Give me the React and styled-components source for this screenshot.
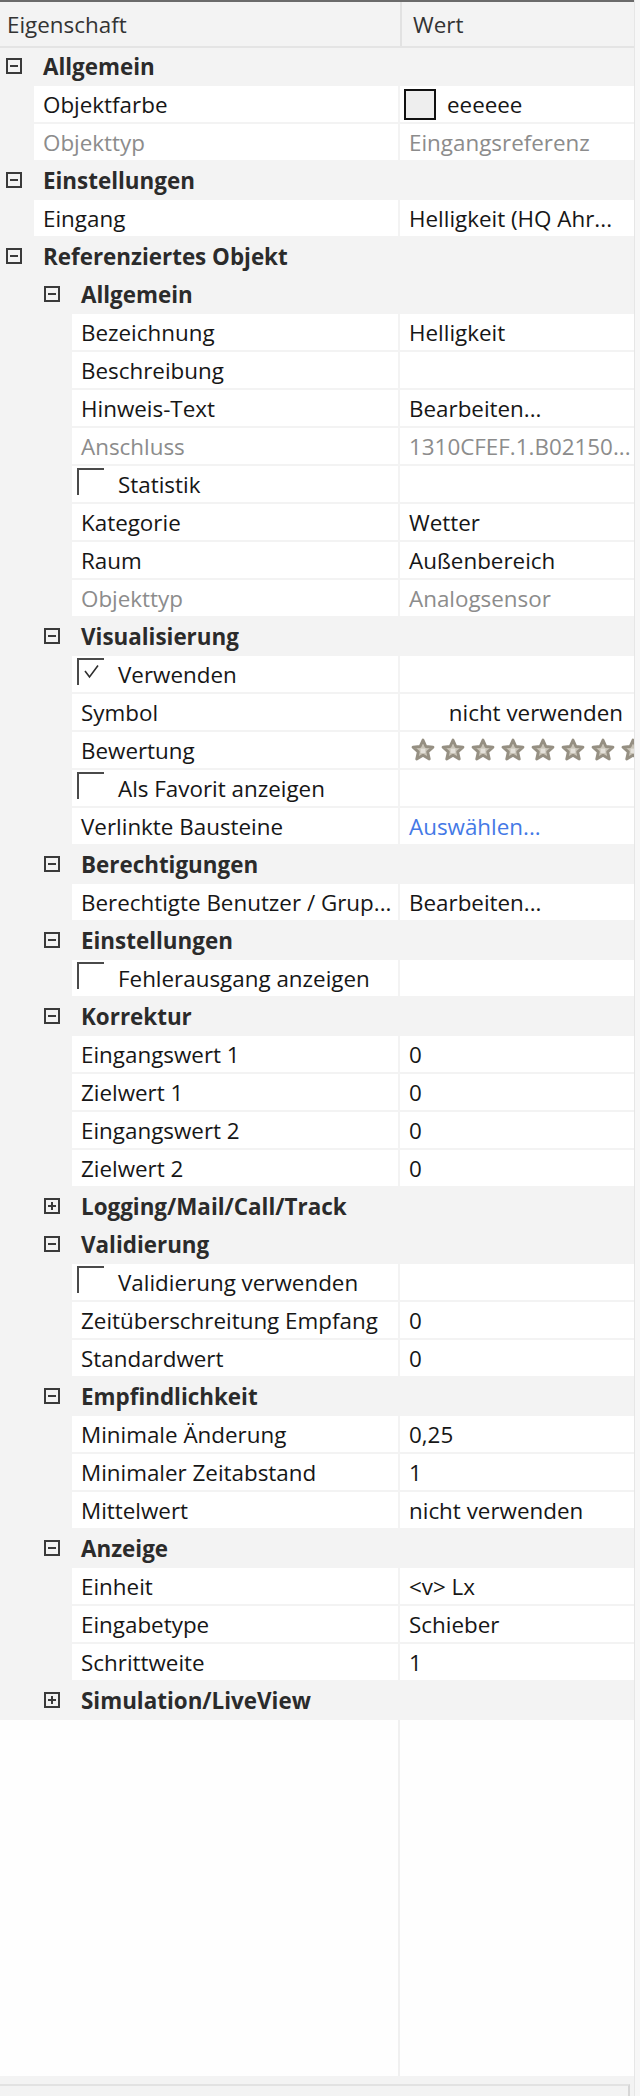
import React from 'react'
import styled, { createGlobalStyle, css } from 'styled-components'

const GlobalStyle = createGlobalStyle`
  html, body {
    margin: 0;
    padding: 0;
    background: #fafafa;
  }
  body {
    font-family: "Open Sans", "Liberation Sans", sans-serif;
    font-size: 22.4px;
    color: #161616;
  }
`

const rows = [
  { group: 'Allgemein', level: 0 },
  { label: 'Objektfarbe', value: 'eeeeee', level: 0, swatch: '#eeeeee' },
  { label: 'Objekttyp', value: 'Eingangsreferenz', level: 0, muted: true },
  { group: 'Einstellungen', level: 0 },
  { label: 'Eingang', value: 'Helligkeit (HQ Ahr...', level: 0 },
  { group: 'Referenziertes Objekt', level: 0 },
  { group: 'Allgemein', level: 1 },
  { label: 'Bezeichnung', value: 'Helligkeit', level: 1 },
  { label: 'Beschreibung', value: '', level: 1 },
  { label: 'Hinweis-Text', value: 'Bearbeiten...', level: 1 },
  { label: 'Anschluss', value: '1310CFEF.1.B02150...', level: 1, muted: true },
  { label: 'Statistik', level: 1, check: false },
  { label: 'Kategorie', value: 'Wetter', level: 1 },
  { label: 'Raum', value: 'Außenbereich', level: 1 },
  { label: 'Objekttyp', value: 'Analogsensor', level: 1, muted: true },
  { group: 'Visualisierung', level: 1 },
  { label: 'Verwenden', level: 1, check: true },
  { label: 'Symbol', value: 'nicht verwenden', level: 1, right: true },
  { label: 'Bewertung', level: 1, stars: 8 },
  { label: 'Als Favorit anzeigen', level: 1, check: false },
  { label: 'Verlinkte Bausteine', value: 'Auswählen...', level: 1, link: true },
  { group: 'Berechtigungen', level: 1 },
  { label: 'Berechtigte Benutzer / Grup...', value: 'Bearbeiten...', level: 1 },
  { group: 'Einstellungen', level: 1 },
  { label: 'Fehlerausgang anzeigen', level: 1, check: false },
  { group: 'Korrektur', level: 1 },
  { label: 'Eingangswert 1', value: '0', level: 1 },
  { label: 'Zielwert 1', value: '0', level: 1 },
  { label: 'Eingangswert 2', value: '0', level: 1 },
  { label: 'Zielwert 2', value: '0', level: 1 },
  { group: 'Logging/Mail/Call/Track', level: 1, collapsed: true },
  { group: 'Validierung', level: 1 },
  { label: 'Validierung verwenden', level: 1, check: false },
  { label: 'Zeitüberschreitung Empfang', value: '0', level: 1 },
  { label: 'Standardwert', value: '0', level: 1 },
  { group: 'Empfindlichkeit', level: 1 },
  { label: 'Minimale Änderung', value: '0,25', level: 1 },
  { label: 'Minimaler Zeitabstand', value: '1', level: 1 },
  { label: 'Mittelwert', value: 'nicht verwenden', level: 1 },
  { group: 'Anzeige', level: 1 },
  { label: 'Einheit', value: '<v> Lx', level: 1 },
  { label: 'Eingabetype', value: 'Schieber', level: 1 },
  { label: 'Schrittweite', value: '1', level: 1 },
  { group: 'Simulation/LiveView', level: 1, collapsed: true },
]

const Star = () => (
  <svg width="24" height="24" viewBox="0 0 24 24">
    <polygon
      points="12,2 14.9,8.5 22,9.2 16.7,13.9 18.3,21 12,17.3 5.7,21 7.3,13.9 2,9.2 9.1,8.5"
      fill="#c9c4b8"
      stroke="#958f82"
      strokeWidth="2.8"
      strokeLinejoin="round"
    />
    <rect x="9.6" y="10.6" width="4.8" height="4.4" fill="#e4e1da" />
  </svg>
)

const CheckMark = () => (
  <svg width="25" height="25" viewBox="0 0 25 25">
    <polyline
      points="6,11 10.5,17 19,5.5"
      fill="none"
      stroke="#2e2e2e"
      strokeWidth="1.6"
    />
  </svg>
)

export default function App() {
  return (
    <>
      <GlobalStyle />
      <Window>
        <Panel>
          <TopLine />
          <Header>
            <HeaderCell>Eigenschaft</HeaderCell>
            <HeaderDivider />
            <HeaderCell $value>Wert</HeaderCell>
          </Header>
          <HeaderLine />
          {rows.map((row, i) =>
            row.group ? (
              <GroupRow key={i} $level={row.level}>
                <GroupInner>
                  <Expander $collapsed={row.collapsed} />
                  <GroupTitle>{row.group}</GroupTitle>
                </GroupInner>
              </GroupRow>
            ) : (
              <ItemRow key={i} $level={row.level}>
                {row.check !== undefined ? (
                  <LabelCell $check>
                    <CheckBox>{row.check && <CheckMark />}</CheckBox>
                    <CheckLabel>{row.label}</CheckLabel>
                  </LabelCell>
                ) : (
                  <LabelCell $muted={row.muted}>{row.label}</LabelCell>
                )}
                <ValueCell
                  $muted={row.muted}
                  $link={row.link}
                  $right={row.right}
                  $swatch={!!row.swatch}
                  $stars={!!row.stars}
                >
                  {row.swatch && <Swatch style={{ background: row.swatch }} />}
                  {row.stars
                    ? Array.from({ length: row.stars }).map((_, s) => <Star key={s} />)
                    : row.value}
                </ValueCell>
              </ItemRow>
            )
          )}
          <Filler>
            <FillerCell />
            <FillerDivider />
            <FillerCell />
          </Filler>
          <Footer>
            <FooterBar />
          </Footer>
        </Panel>
        <RightEdge />
      </Window>
    </>
  )
}

const Window = styled.div`
  display: flex;
  width: 640px;
  height: 2096px;
  overflow: hidden;
`

const Panel = styled.div`
  width: 634px;
  display: flex;
  flex-direction: column;
  background: #f3f3f3;
`

const RightEdge = styled.div`
  flex: 1;
  background: #f7f7f7;
  border-left: 1px solid #e6e6e6;
`

const TopLine = styled.div`
  height: 2px;
  background: #6b6b6b;
`

const Header = styled.div`
  height: 44px;
  display: flex;
  background: #f3f3f3;
`

const HeaderCell = styled.div`
  display: flex;
  align-items: center;
  color: #333;
  ${({ $value }) =>
    $value
      ? css`
          flex: 1;
          padding-left: 11px;
        `
      : css`
          width: 393px;
          padding-left: 7px;
        `}
`

const HeaderDivider = styled.div`
  width: 2px;
  background: #e2e2e2;
`

const HeaderLine = styled.div`
  height: 2px;
  background: #e4e4e4;
`

const GroupRow = styled.div`
  height: 38px;
  padding-left: ${({ $level }) => 6 + $level * 38}px;
`

const GroupInner = styled.div`
  height: 36px;
  display: flex;
  align-items: center;
  gap: 21px;
`

const Expander = styled.span`
  position: relative;
  width: 16px;
  height: 16px;
  box-sizing: border-box;
  border: 2px solid #3a3a3a;
  flex-shrink: 0;

  &::before {
    content: '';
    position: absolute;
    left: 2px;
    right: 2px;
    top: 5px;
    height: 2px;
    background: #3a3a3a;
  }

  &::after {
    content: '';
    position: absolute;
    top: 2px;
    bottom: 2px;
    left: 5px;
    width: 2px;
    background: #3a3a3a;
    display: ${({ $collapsed }) => ($collapsed ? 'block' : 'none')};
  }
`

const GroupTitle = styled.span`
  font-weight: 700;
  color: #2b2b2b;
  white-space: nowrap;
`

const ItemRow = styled.div`
  height: 38px;
  display: grid;
  grid-template-columns: 1fr 234px;
  column-gap: 2px;
  padding-left: ${({ $level }) => 34 + $level * 38}px;
`

const cell = css`
  height: 36px;
  background: #ffffff;
  display: flex;
  align-items: center;
  white-space: nowrap;
  overflow: hidden;
`

const LabelCell = styled.div`
  ${cell};
  padding-left: ${({ $check }) => ($check ? 5 : 9)}px;
  color: ${({ $muted }) => ($muted ? '#8c8c8c' : '#161616')};
`

const CheckBox = styled.span`
  align-self: flex-start;
  margin-top: 2px;
  width: 27px;
  height: 27px;
  box-sizing: border-box;
  border-top: 2px solid #4a4a4a;
  border-left: 2px solid #4a4a4a;
  flex-shrink: 0;
  display: flex;
`

const CheckLabel = styled.span`
  margin-left: 14px;
`

const ValueCell = styled.div`
  ${cell};
  padding-left: 9px;
  color: ${({ $muted, $link }) => ($link ? '#4479e6' : $muted ? '#8c8c8c' : '#161616')};
  ${({ $right }) =>
    $right &&
    css`
      justify-content: flex-end;
      padding-right: 11px;
    `}
  ${({ $swatch }) =>
    $swatch &&
    css`
      padding-left: 4px;
      gap: 11px;
    `}
  ${({ $stars }) =>
    $stars &&
    css`
      padding-left: 11px;
      gap: 6px;
      & > svg {
        flex-shrink: 0;
      }
    `}
`

const Swatch = styled.span`
  width: 32px;
  height: 31px;
  box-sizing: border-box;
  border: 2px solid #111;
  flex-shrink: 0;
`

const Filler = styled.div`
  height: 356px;
  display: grid;
  grid-template-columns: 398px 2px 1fr;
`

const FillerCell = styled.div`
  background: #fefefe;
`

const FillerDivider = styled.div`
  background: #f0f0f0;
`

const Footer = styled.div`
  flex: 1;
  padding-top: 8px;
  background: #f3f3f3;
`

const FooterBar = styled.div`
  height: 100%;
  margin-right: 4px;
  border-top: 2px solid #e2e2e2;
  border-right: 2px solid #d6d6d6;
`
